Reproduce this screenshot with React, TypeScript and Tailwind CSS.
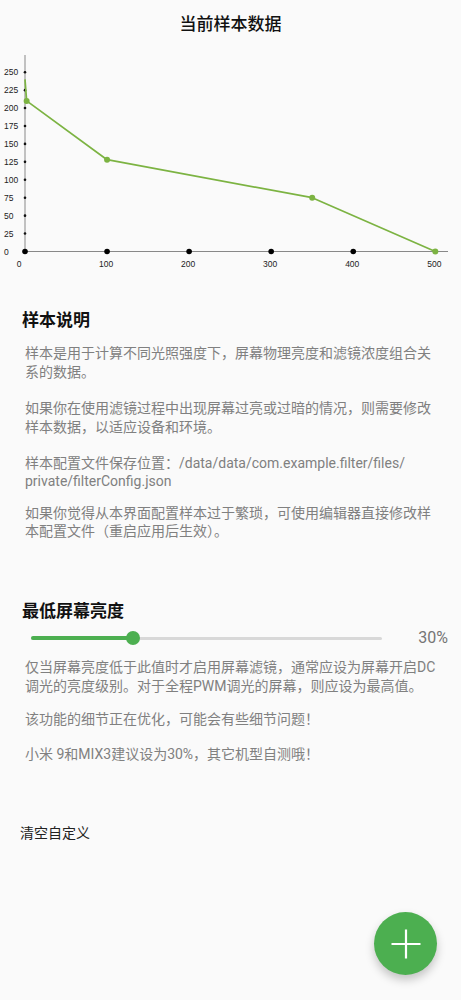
import React from "react";

const FONT = { fontFamily: 'Roboto, "Noto Sans CJK SC", sans-serif' };

// chart scale, in page pixels
const X0 = 25;
const Y0 = 251.5;
const sx = (v: number) => X0 + v * 0.8206;
const sy = (v: number) => Y0 - v * 0.7172;

const samples: [number, number][] = [
  [0, 240],
  [2, 210],
  [100, 128],
  [350, 75],
  [500, 0],
];

function SampleChart() {
  const yTicks = [25, 50, 75, 100, 125, 150, 175, 200, 225, 250];
  const xTicks = [0, 100, 200, 300, 400];
  const line = samples.map(([x, y]) => `${sx(x)},${sy(y)}`).join(" ");

  return (
    <svg className="block" width={461} height={240} viewBox="0 36 461 240">
      <line x1={X0} y1={55} x2={X0} y2={Y0} stroke="#888" strokeWidth={1} />
      <line x1={X0} y1={Y0} x2={448} y2={Y0} stroke="#888" strokeWidth={1} />

      {[0, ...yTicks].map((v) => (
        <text
          key={`yl${v}`}
          x={4}
          y={sy(v)}
          fontSize={8.5}
          fill="#222"
          dominantBaseline="central"
          fontFamily='"Liberation Sans", sans-serif'
        >
          {v}
        </text>
      ))}
      {yTicks.map((v) => (
        <circle key={`yt${v}`} cx={X0} cy={sy(v)} r={1.3} fill="#111" />
      ))}

      {[...xTicks, 500].map((v) => (
        <text
          key={`xl${v}`}
          x={v === 0 ? 19 : sx(v) - 1}
          y={263.5}
          fontSize={8.5}
          fill="#222"
          textAnchor="middle"
          dominantBaseline="central"
          fontFamily='"Liberation Sans", sans-serif'
        >
          {v}
        </text>
      ))}
      {xTicks.map((v) => (
        <circle key={`xt${v}`} cx={sx(v)} cy={Y0} r={2.8} fill="#000" />
      ))}

      <polyline points={line} fill="none" stroke="#7cb342" strokeWidth={1.7} strokeLinejoin="round" />
      {samples.slice(1).map(([x, y]) => (
        <circle key={`p${x}`} cx={sx(x)} cy={sy(y)} r={3} fill="#7cb342" />
      ))}
    </svg>
  );
}

export default function App() {
  return (
    <div className="relative h-[1000px] w-[461px] overflow-hidden bg-[#fafafa]" style={FONT}>
      <h1 className="pt-[12px] text-center text-[17px] font-medium leading-[24px] text-[#111]">当前样本数据</h1>

      <SampleChart />

      <section className="mt-[32px]">
        <h2 className="pl-[22px] text-[17px] font-bold leading-[24px] text-[#111]">样本说明</h2>
        <div className="ml-[25px] w-[425px] text-[14px] leading-[18.5px] text-[#808080]">
          <p className="mt-[12px]">
            样本是用于计算不同光照强度下，屏幕物理亮度和滤镜浓度组合关
            <br />
            系的数据。
          </p>
          <p className="mt-[18px]">
            如果你在使用滤镜过程中出现屏幕过亮或过暗的情况，则需要修改
            <br />
            样本数据，以适应设备和环境。
          </p>
          <p className="mt-[17.5px]">
            样本配置文件保存位置：/data/data/com.example.filter/files/
            <br />
            private/filterConfig.json
          </p>
          <p className="mt-[13px]">
            如果你觉得从本界面配置样本过于繁琐，可使用编辑器直接修改样
            <br />
            本配置文件（重启应用后生效）。
          </p>
        </div>
      </section>

      <section className="mt-[58px]">
        <h2 className="pl-[22px] text-[17px] font-bold leading-[24px] text-[#111]">最低屏幕亮度</h2>
        <div className="mt-[5.5px] flex h-[20px] items-center pl-[31px] pr-[13px]">
          <div className="relative h-[3px] flex-1 rounded-full bg-[#d8d8d8]">
            <div className="absolute left-0 top-[-0.5px] h-[4px] w-[102px] rounded-full bg-[#4caf50]" />
            <div className="absolute left-[95px] top-[-5.5px] h-[14px] w-[14px] rounded-full bg-[#4caf50]" />
          </div>
          <span className="ml-[36px] text-[16px] leading-[20px] text-[#757575]">30%</span>
        </div>
        <div className="ml-[25px] w-[425px] text-[14px] leading-[19.5px] text-[#808080]">
          <p className="mt-[9.5px]">
            仅当屏幕亮度低于此值时才启用屏幕滤镜，通常应设为屏幕开启DC
            <br />
            调光的亮度级别。对于全程PWM调光的屏幕，则应设为最高值。
          </p>
          <p className="mt-[13.5px]">该功能的细节正在优化，可能会有些细节问题！</p>
          <p className="mt-[15.5px]">小米 9和MIX3建议设为30%，其它机型自测哦！</p>
        </div>
      </section>

      <button className="mt-[58px] block pl-[20px] text-left text-[14px] leading-[20px] text-[#222]">清空自定义</button>

      <button className="absolute bottom-[25px] right-[24px] flex h-[63px] w-[63px] items-center justify-center rounded-full bg-[#4caf50] shadow-[0_5px_10px_rgba(0,0,0,0.22)]">
        <svg width={30} height={30} viewBox="0 0 30 30">
          <path d="M15 0.5V29.5M0.5 15H29.5" stroke="#fff" strokeWidth={2.2} />
        </svg>
      </button>
    </div>
  );
}
